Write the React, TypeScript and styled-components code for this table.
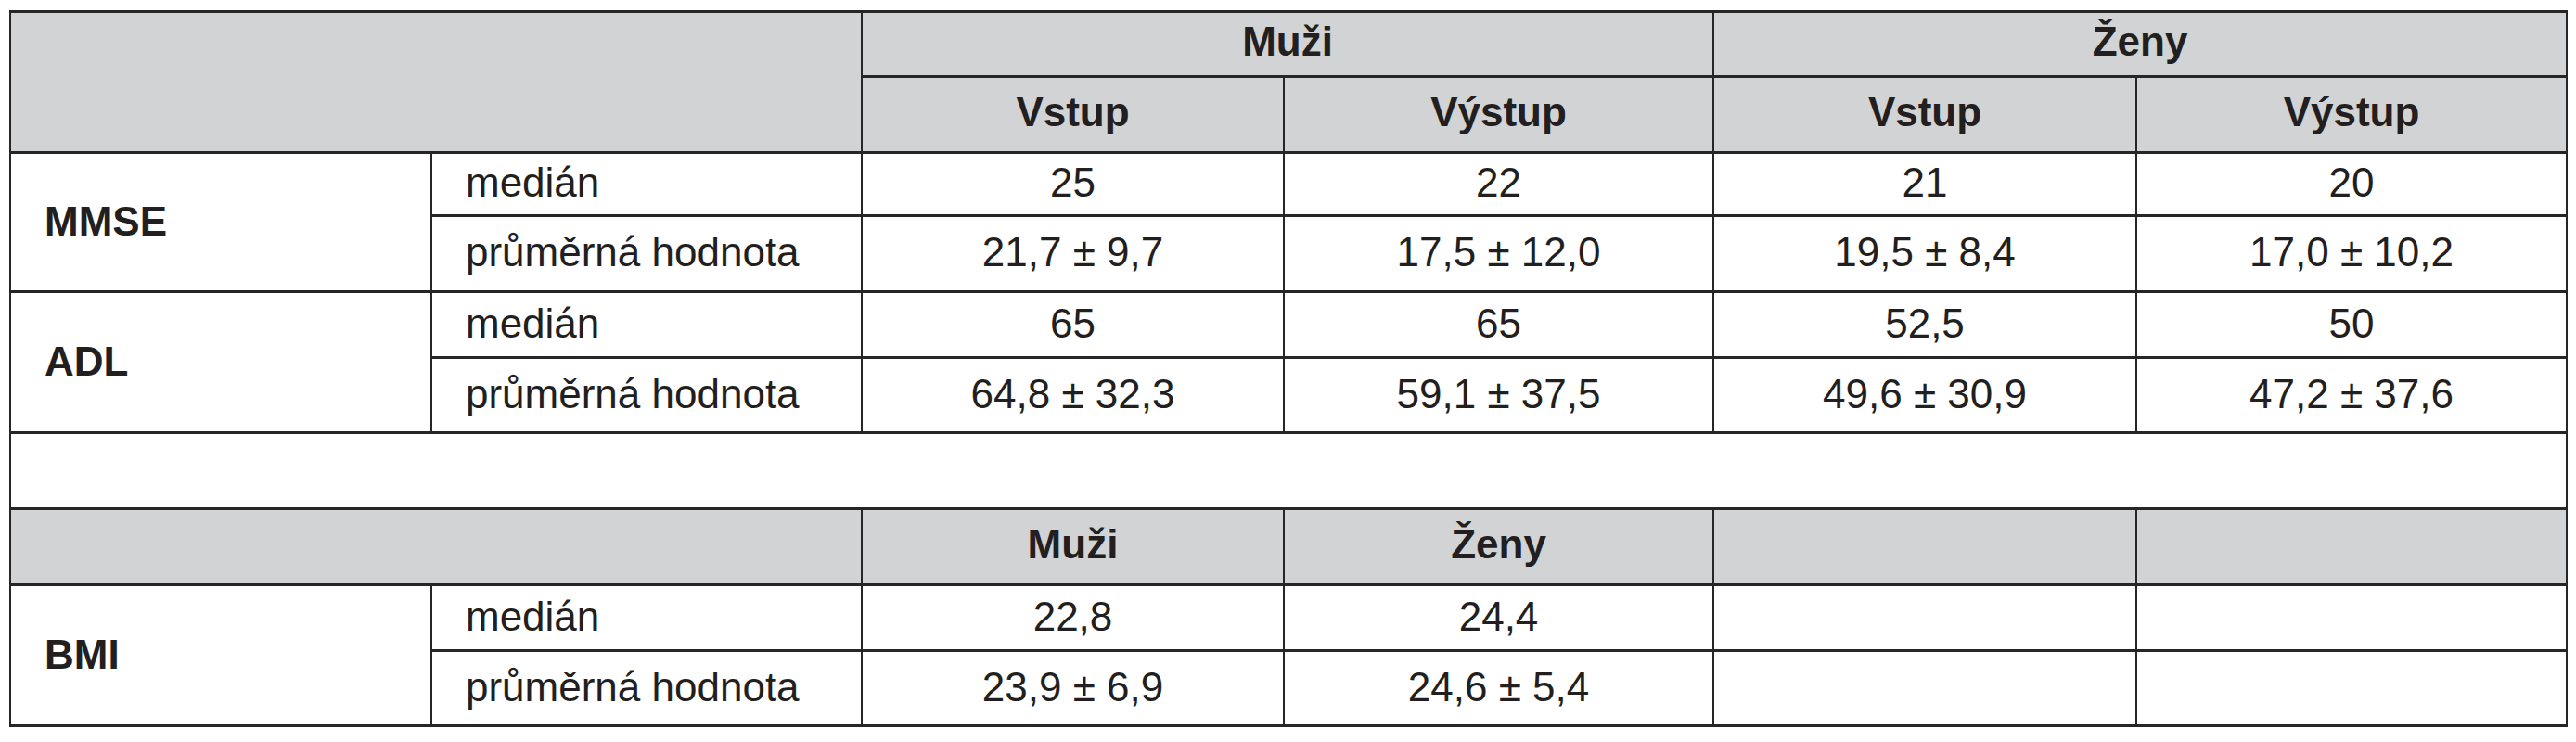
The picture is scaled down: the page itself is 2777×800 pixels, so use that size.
import styled, { createGlobalStyle } from "styled-components";

const LINE = "#262626";
const SHADE = "#d1d3d4";

const GlobalStyle = createGlobalStyle`
  html, body {
    margin: 0;
    padding: 0;
    background: #fff;
  }

  body {
    font-family: "Liberation Sans", Arial, sans-serif;
    color: #231f20;
  }
`;

const Page = styled.div`
  padding: 11px 0 0 10px;
`;

const Table = styled.table`
  border-collapse: collapse;
  table-layout: fixed;
  width: 2756px;
  font-size: 44px;
  line-height: 1.15;
`;

const Row = styled.tr<{ $h: number }>`
  height: ${({ $h }) => $h}px;
`;

const cellLines = `
  border-top: 3px solid ${LINE};
  border-bottom: 3px solid ${LINE};
  border-left: 2px solid ${LINE};
  border-right: 2px solid ${LINE};
`;

const HeadCell = styled.th`
  ${cellLines}
  background: ${SHADE};
  font-weight: bold;
  text-align: center;
  vertical-align: middle;
  padding: 0 0 4px;
`;

const Label = styled.th`
  ${cellLines}
  font-weight: bold;
  text-align: left;
  vertical-align: middle;
  padding: 0 0 0 36px;
`;

const Stat = styled.td`
  ${cellLines}
  text-align: left;
  vertical-align: middle;
  padding: 0 0 2px 36px;
`;

const Value = styled.td`
  ${cellLines}
  text-align: center;
  vertical-align: middle;
  padding: 0 0 2px;
`;

const Spacer = styled.td`
  ${cellLines}
  padding: 0;
`;

const widths = [454, 464, 455, 463, 456, 464];

type Block = {
  name: string;
  median: string[];
  mean: string[];
};

const topBlocks: Block[] = [
  {
    name: "MMSE",
    median: ["25", "22", "21", "20"],
    mean: ["21,7 ± 9,7", "17,5 ± 12,0", "19,5 ± 8,4", "17,0 ± 10,2"],
  },
  {
    name: "ADL",
    median: ["65", "65", "52,5", "50"],
    mean: ["64,8 ± 32,3", "59,1 ± 37,5", "49,6 ± 30,9", "47,2 ± 37,6"],
  },
];

const bmi: Block = {
  name: "BMI",
  median: ["22,8", "24,4", "", ""],
  mean: ["23,9 ± 6,9", "24,6 ± 5,4", "", ""],
};

const BlockRows = ({ block, medianH, meanH }: { block: Block; medianH: number; meanH: number }) => (
  <>
    <Row $h={medianH}>
      <Label rowSpan={2}>{block.name}</Label>
      <Stat>medián</Stat>
      {block.median.map((v, i) => (
        <Value key={i}>{v}</Value>
      ))}
    </Row>
    <Row $h={meanH}>
      <Stat>průměrná hodnota</Stat>
      {block.mean.map((v, i) => (
        <Value key={i}>{v}</Value>
      ))}
    </Row>
  </>
);

export default function App() {
  return (
    <>
      <GlobalStyle />
      <Page>
        <Table>
          <colgroup>
            {widths.map((w, i) => (
              <col key={i} style={{ width: w }} />
            ))}
          </colgroup>
          <tbody>
            <Row $h={70}>
              <HeadCell colSpan={2} rowSpan={2} />
              <HeadCell colSpan={2}>Muži</HeadCell>
              <HeadCell colSpan={2}>Ženy</HeadCell>
            </Row>
            <Row $h={82}>
              <HeadCell>Vstup</HeadCell>
              <HeadCell>Výstup</HeadCell>
              <HeadCell>Vstup</HeadCell>
              <HeadCell>Výstup</HeadCell>
            </Row>
            <BlockRows block={topBlocks[0]} medianH={68} meanH={82} />
            <BlockRows block={topBlocks[1]} medianH={71} meanH={81} />
            <Row $h={82}>
              <Spacer colSpan={6} />
            </Row>
            <Row $h={82}>
              <HeadCell colSpan={2} />
              <HeadCell>Muži</HeadCell>
              <HeadCell>Ženy</HeadCell>
              <HeadCell />
              <HeadCell />
            </Row>
            <BlockRows block={bmi} medianH={71} meanH={81} />
          </tbody>
        </Table>
      </Page>
    </>
  );
}
